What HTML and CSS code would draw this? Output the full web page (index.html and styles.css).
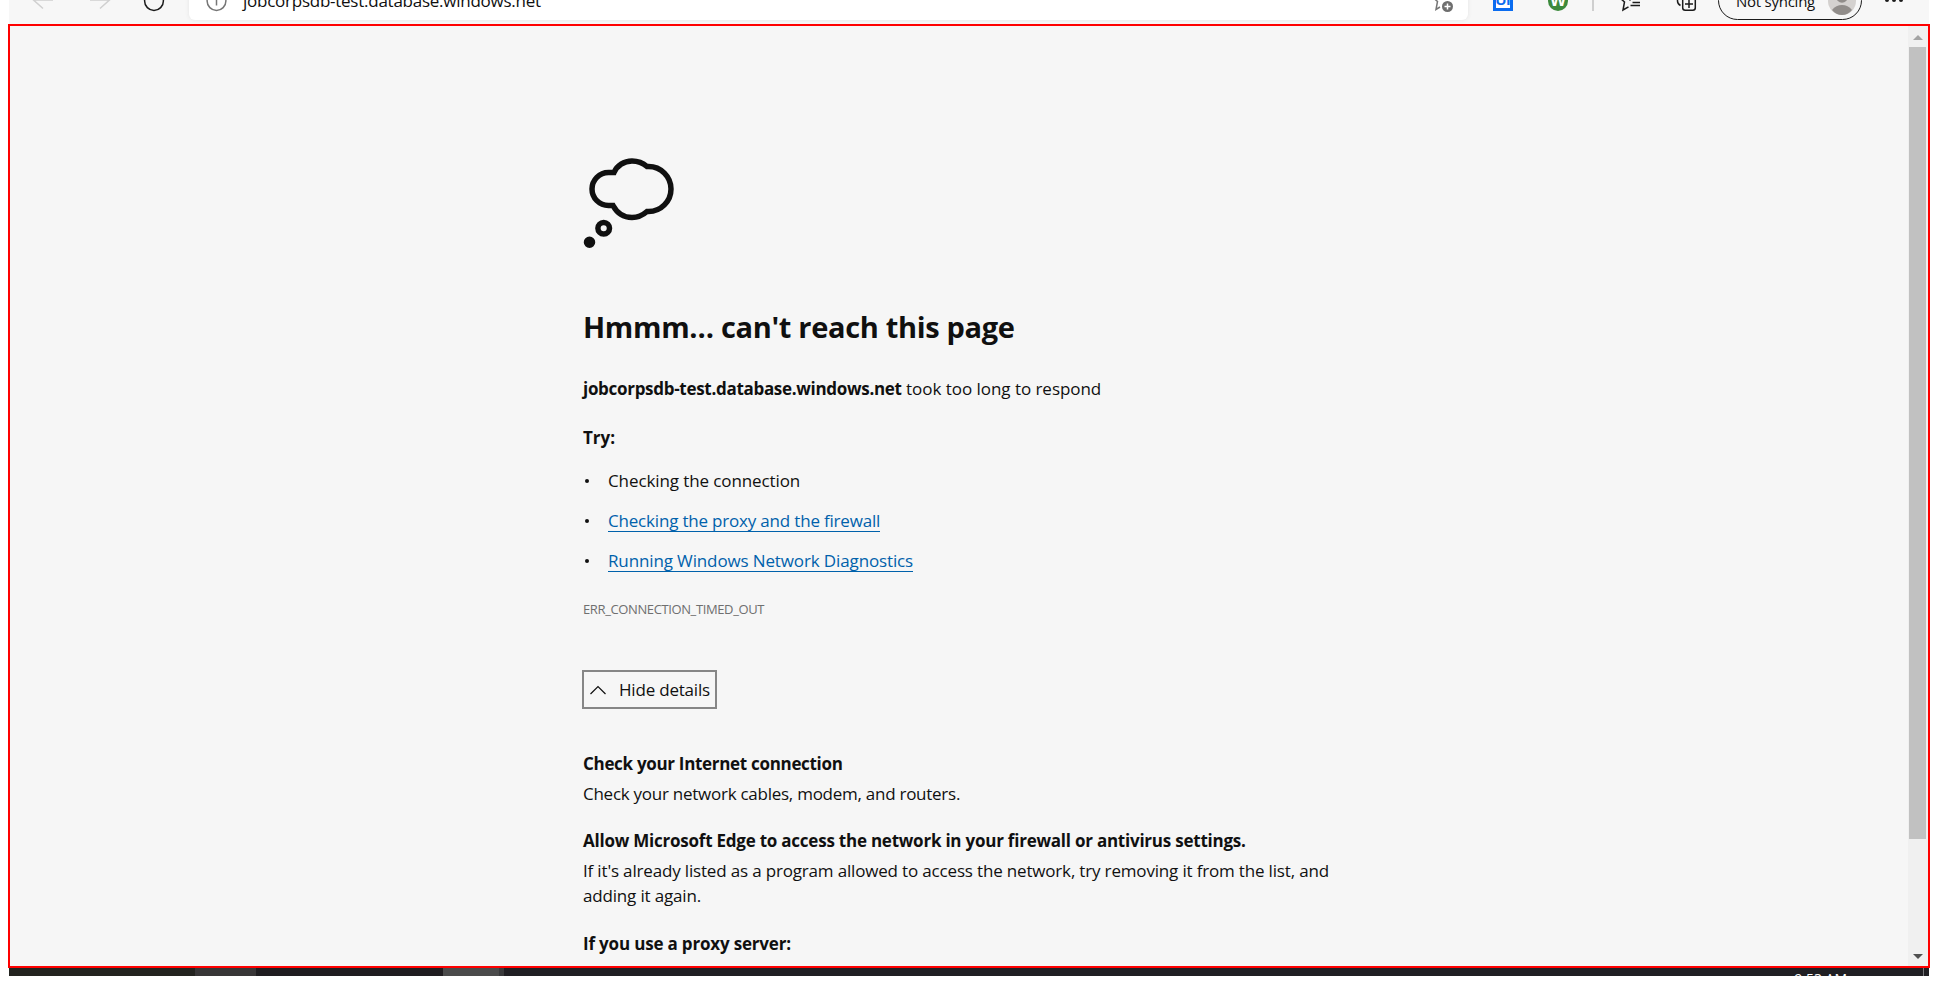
FILE: index.html
```html
<!DOCTYPE html>
<html lang="en">
<head>
<meta charset="utf-8">
<title>jobcorpsdb-test.database.windows.net</title>
<link rel="stylesheet" href="styles.css">
</head>
<body>
<div class="window">
  <header class="toolbar">
    <div class="bar">
      <svg class="icon back" width="24" height="24" viewBox="0 0 24 24"><path d="M22 12H2.5M12 3.5 2.5 12 12 20.500"/></svg>
      <svg class="icon forward" width="24" height="24" viewBox="0 0 24 24"><path d="M2 12H21.500M12 3.500 21.500 12 12 20.500"/></svg>
      <svg class="icon reload" width="24" height="24" viewBox="0 0 24 24"><circle cx="12" cy="13" r="9.400"/></svg>
      <div class="address">
        <svg class="icon info" width="24" height="24" viewBox="0 0 24 24"><circle cx="12.500" cy="13" r="9.400"/><path d="M12.500 11v6.500"/></svg>
        <span class="url">jobcorpsdb-test.database.windows.net</span>
        <svg class="icon addfav" width="24" height="24" viewBox="0 0 24 24"><path d="M2 9.500 6.500 13.500 5 21.500 9 19"/><circle class="solid" cx="16.500" cy="18.500" r="5.500"/><path class="plus" d="M13.500 18.500h6M16.500 15.500v6"/></svg>
      </div>
      <div class="ext-ui"><span>UI</span></div>
      <div class="ext-w"><span>W</span></div>
      <div class="divider"></div>
      <svg class="icon favs" width="24" height="24" viewBox="0 0 24 24"><path d="M2 10 6.500 14 5 22 10.500 18.800M13 10.500 11.500 12.500M14.500 14.500H22M12.500 17.500H22"/></svg>
      <svg class="icon coll" width="24" height="24" viewBox="0 0 24 24"><rect x="8.700" y="8.700" width="12.600" height="13.600" rx="2.500"/><path d="M15 12v8M11 16h8M3.500 10V13Q3.500 16 6.500 17.500"/></svg>
      <div class="profile"><span class="sync">Not syncing</span>
        <svg class="avatar" width="28" height="28" viewBox="0 0 28 28"><circle cx="14" cy="14" r="14" fill="#d4d1cf"/><circle cx="14" cy="10" r="5.800" fill="#918d8a"/><path d="M4 23Q8 18 14 18T24 23Q20 28 14 28T4 23Z" fill="#918d8a"/></svg>
      </div>
      <svg class="icon more" width="24" height="24" viewBox="0 0 24 24"><circle cx="5" cy="12" r="2"/><circle cx="12" cy="12" r="2"/><circle cx="19" cy="12" r="2"/></svg>
    </div>
  </header>
  <main class="viewport">
    <div class="content">
      <svg class="cloud" width="96" height="96" viewBox="0 0 96 96"><path d="M31 16.500H25.500A16.500 16.500 0 0 0 25.500 49.500H30C34 57 41 61.500 49 61.500C55 61.500 60 59 64 55.500H65.500A22.500 22.500 0 0 0 65.500 10.500H64C60 7 55 5 49 5C41 5 34 9.500 31 16.500Z"/><circle cx="20.700" cy="72.300" r="5.800"/><circle class="dot" cx="6.500" cy="86.300" r="3"/></svg>
      <h1>Hmmm… can't reach this page</h1>
      <p class="summary"><strong>jobcorpsdb-test.database.windows.net</strong> <span class="tail">took too long to respond</span></p>
      <p class="try">Try:</p>
      <ul class="tips">
        <li><span class="tip1">Checking the connection</span></li>
        <li><a class="tip2">Checking the proxy and the firewall</a></li>
        <li><a class="tip3">Running Windows Network Diagnostics</a></li>
      </ul>
      <p class="code">ERR_CONNECTION_TIMED_OUT</p>
      <button class="details"><svg width="16" height="10" viewBox="0 0 16 10"><path d="M.5 9 8 1.500 15.500 9"/></svg><span>Hide details</span></button>
      <section class="cables">
        <h2>Check your Internet connection</h2>
        <p>Check your network cables, modem, and routers.</p>
      </section>
      <section class="firewall">
        <h2>Allow Microsoft Edge to access the network in your firewall or antivirus settings.</h2>
        <p>If it's already listed as a program allowed to access the network, try removing it from the list, and<br>adding it again.</p>
      </section>
      <section class="proxy">
        <h2>If you use a proxy server:</h2>
      </section>
    </div>
    <div class="scrollbar"><i class="up"></i><i class="thumb"></i><i class="down"></i></div>
  </main>
  <footer class="taskbar"><i class="start"></i><i class="search"></i><i class="apps"></i><i class="active"></i><i class="edge"></i><span class="clock">9:53 AM</span><i class="show"></i></footer>
</div>
</body>
</html>
```
FILE: styles.css
```css
* { box-sizing: border-box; }
body { margin: 0; background: #fff; overflow: hidden; font-family: "Open Sans", "Noto Sans", sans-serif; color: #101010; }
h1, h2, p, ul { margin: 0; padding: 0; }
.window { width: 1922px; margin-left: 8px; }

.toolbar { height: 24px; margin: 0 1px; background: #f7f7f7; display: flex; align-items: flex-end; overflow: hidden; }
.bar { height: 48px; flex: 1; display: flex; align-items: center; font-size: 17px; }
.icon { flex: none; fill: none; stroke: #1b1b1b; stroke-width: 1.5; }
.back { margin-left: 22px; stroke: #d0d0d0; }
.forward { margin-left: 33px; stroke: #d0d0d0; }
.reload { margin-left: 30px; }
.address { width: 1279px; height: 40px; margin-left: 23px; padding: 0 13px 0 15px; border-radius: 6px; background: #fff; box-shadow: 0 0 4px #e4e4e4; display: flex; align-items: center; }
.info { stroke: #767676; }
.url { margin: 2px 0 0 15px; line-height: 24px; letter-spacing: -.25px; }
.addfav { margin-left: auto; stroke: #767676; }
.addfav .solid { fill: #6e6e6e; stroke: none; }
.addfav .plus { stroke: #fff; }
.ext-ui { flex: none; width: 20px; height: 22px; margin-left: 25px; border: 3px solid #0a6cf0; background: #fff; color: #0a6cf0; font: bold 15px/15px "Liberation Sans", sans-serif; display: flex; justify-content: center; }
.ext-w { flex: none; width: 20px; height: 20px; margin: 2px 0 0 35px; border-radius: 50%; background: #3c8a3c; color: #fff; font: bold 17px/19px "Liberation Sans", sans-serif; display: flex; justify-content: center; }
.divider { width: 2px; height: 22px; margin-left: 24px; background: #cfcfcf; }
.favs { margin-left: 24px; }
.coll { margin-left: 32px; }
.profile { flex: none; width: 144px; height: 39px; margin-left: 20px; padding: 0 5px 0 17px; border: 1.500px solid #1b1b1b; border-radius: 20px; display: flex; align-items: center; justify-content: space-between; }
.sync { margin-top: 1px; font-size: 15px; letter-spacing: -.25px; white-space: nowrap; }
.avatar { flex: none; margin-top: 2px; }
.more { margin-left: 20px; fill: #1b1b1b; stroke: none; }

.viewport { height: 944px; border: 2px solid #f00; background: #f6f6f6; display: flex; justify-content: space-between; overflow: hidden; }
.content { padding: 130px 0 0 573px; font-size: 17px; line-height: 24px; white-space: nowrap; }
.cloud { display: block; fill: none; stroke: #101010; stroke-width: 5.500; }
.cloud .dot { fill: #101010; }
h1 { margin-top: 55px; font-size: 29px; line-height: 40px; font-weight: 700; letter-spacing: -.33px; }
.summary { margin-top: 30px; }
.summary strong { font-weight: 700; letter-spacing: -.3px; }
.tail { letter-spacing: -.04px; }
.try { margin-top: 25px; font-weight: 700; }
.tips { margin-top: 19px; list-style: none; display: grid; row-gap: 16px; }
.tips li { display: flex; align-items: flex-start; height: 24px; }
.tips li::before { content: ""; width: 4px; height: 4px; margin: 10px 19px 0 2px; border-radius: 50%; background: #101010; }
.tips a { color: #0061ab; border-bottom: 1px solid #0061ab; height: 23px; }
.tip1 { letter-spacing: -.1px; }
.tip2 { letter-spacing: -.19px; }
.tip3 { letter-spacing: -.13px; }
.code { margin-top: 27px; font-size: 13px; line-height: 18px; color: #6f6f6f; letter-spacing: -.38px; }
.details { display: flex; align-items: center; width: 135px; height: 39px; margin: 52px 0 0 -1px; padding: 1px 0 0 6px; border: 2px solid #868686; background: none; font: inherit; letter-spacing: -.2px; color: #101010; }
.details svg { flex: none; fill: none; stroke: #101010; stroke-width: 1.200; margin-right: 13px; }
h2 { font-size: 17px; line-height: 24px; font-weight: 700; }
section p { margin-top: 5px; line-height: 25px; }
.cables { margin-top: 43px; }
.cables h2 { letter-spacing: -.31px; }
.cables p { letter-spacing: -.26px; }
.firewall { margin-top: 23px; }
.firewall h2 { letter-spacing: -.23px; }
.firewall p { letter-spacing: -.17px; }
.proxy { margin-top: 24px; }
.proxy h2 { letter-spacing: -.18px; }

.scrollbar { width: 20px; padding-right: 1px; background: #f0f0f0; display: flex; flex-direction: column; align-items: center; }
.up { margin-top: 9px; border: 5px solid transparent; border-top: 0; border-bottom-color: #a3a3a3; }
.thumb { width: 17px; height: 792px; margin-top: 7px; background: #c1c1c1; }
.down { margin-top: 115px; border: 5px solid transparent; border-bottom: 0; border-top-color: #505050; }

.taskbar { height: 8px; margin: 0 1px; background: #201f23; display: flex; overflow: hidden; }
.start { width: 186px; background: #23231f; }
.search { width: 61px; background: #383637; }
.apps { width: 187px; background: #1f1d20; }
.active { width: 56px; background: #4b4b4b; }
.edge { width: 5px; background: #39393b; }
.clock { margin: 1px 0 0 auto; font-size: 14px; line-height: 20px; color: #fff; white-space: nowrap; }
.show { width: 1px; margin: 0 5px 0 76px; background: #77777a; }
```
